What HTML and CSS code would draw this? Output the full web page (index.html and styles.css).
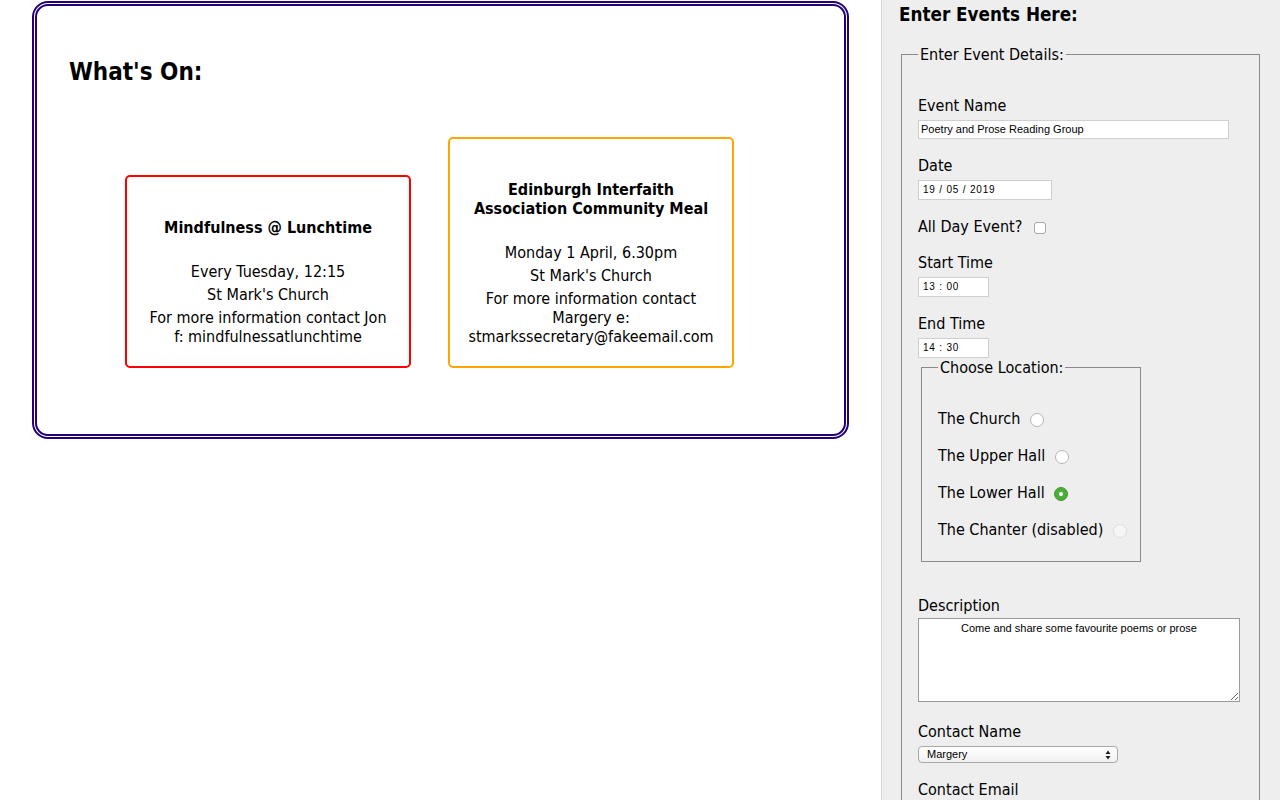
FILE: index.html
```html
<!DOCTYPE html>
<html lang="en">
<head>
<meta charset="utf-8">
<title>What's On</title>
<link rel="stylesheet" href="styles.css">
</head>
<body>
<div class="page">
  <main class="main">
    <section class="whats-on">
      <h2 class="title">What's On:</h2>
      <div class="cards">
        <article class="card card-red">
          <h4 class="card-title">Mindfulness @ Lunchtime</h4>
          <p>Every Tuesday, 12:15</p>
          <p>St Mark's Church</p>
          <p>For more information contact Jon f: mindfulnessatlunchtime</p>
        </article>
        <article class="card card-orange">
          <h4 class="card-title">Edinburgh Interfaith Association Community Meal</h4>
          <p>Monday 1 April, 6.30pm</p>
          <p>St Mark's Church</p>
          <p>For more information contact Margery e: stmarkssecretary@fakeemail.com</p>
        </article>
      </div>
    </section>
  </main>
  <aside class="sidebar">
    <h3 class="side-title">Enter Events Here:</h3>
    <form class="event-form">
      <fieldset class="details">
        <legend class="legend">Enter Event Details:</legend>
        <div class="field">
          <label class="lbl" for="ename">Event Name</label>
          <input class="inp inp-name" id="ename" type="text" value="Poetry and Prose Reading Group">
        </div>
        <div class="field">
          <label class="lbl" for="edate">Date</label>
          <input class="inp inp-date" id="edate" type="text" value="19 / 05 / 2019">
        </div>
        <div class="field">
          <label class="lbl-inline" for="allday">All Day Event? <input class="check" id="allday" type="checkbox"></label>
        </div>
        <div class="field">
          <label class="lbl" for="stime">Start Time</label>
          <input class="inp inp-time" id="stime" type="text" value="13 : 00">
        </div>
        <div class="field field-last">
          <label class="lbl" for="etime">End Time</label>
          <input class="inp inp-time" id="etime" type="text" value="14 : 30">
        </div>
        <fieldset class="location">
          <legend class="legend">Choose Location:</legend>
          <label class="radio-row">The Church <input class="radio" type="radio" name="loc"></label>
          <label class="radio-row">The Upper Hall <input class="radio" type="radio" name="loc"></label>
          <label class="radio-row">The Lower Hall <input class="radio" type="radio" name="loc" checked></label>
          <label class="radio-row">The Chanter (disabled) <input class="radio" type="radio" name="loc" disabled></label>
        </fieldset>
        <div class="field field-desc">
          <label class="lbl lbl-tight" for="desc">Description</label>
          <textarea class="ta" id="desc">Come and share some favourite poems or prose</textarea>
        </div>
        <div class="field">
          <label class="lbl" for="cname">Contact Name</label>
          <div class="select-wrap">
            <select class="sel" id="cname">
              <option>Margery</option>
              <option>Jon</option>
            </select>
            <svg class="sel-arrow" width="6" height="10" viewBox="0 0 6 10" aria-hidden="true">
              <path d="M0.5 4 L3 0.5 L5.5 4 Z" fill="#222"/>
              <path d="M0.5 6 L3 9.5 L5.5 6 Z" fill="#222"/>
            </svg>
          </div>
        </div>
        <div class="field">
          <label class="lbl" for="cemail">Contact Email</label>
          <input class="inp inp-email" id="cemail" type="email" value="">
        </div>
      </fieldset>
    </form>
  </aside>
</div>
</body>
</html>
```

FILE: styles.css
```css
html, body {
  margin: 0;
  padding: 0;
  background: #fff;
}

body {
  font-family: "DejaVu Sans Condensed", "DejaVu Sans", sans-serif;
  font-stretch: semi-condensed;
  font-size: 16px;
  color: #000;
}

.page {
  display: flex;
  align-items: stretch;
  min-height: 800px;
}

.main {
  width: 881px;
  flex: 0 0 881px;
}

.whats-on {
  margin: 1px 32px 0 32px;
  border: 5px double #230078;
  border-radius: 16px;
  padding: 32px;
}

.title {
  font-size: 24px;
  line-height: 29px;
  font-weight: bold;
  margin: 20px 0 50px;
}

.cards {
  display: flex;
  align-items: flex-end;
  gap: 37px;
  padding: 0 0 34px 56px;
}

.card {
  width: 286px;
  box-sizing: border-box;
  border: 2px solid #ff0000;
  border-radius: 5px;
  padding: 20px 16px 20px;
  text-align: center;
  line-height: 19px;
  font-size: 16px;
}

.card-orange {
  border-color: #ffa500;
}

.card-title {
  font-size: 16px;
  font-weight: bold;
  margin: 21px 0 25px;
}

.card p {
  margin: 0 0 4px;
}

.card p:last-child {
  margin-bottom: 0;
}

/* Sidebar */
.sidebar {
  flex: 1 1 auto;
  box-sizing: border-box;
  background: #eeeeee;
  border-left: 1px solid #d6d6d6;
  padding: 4px 18px 0 17px;
}

.side-title {
  font-size: 18.72px;
  line-height: 22px;
  font-weight: bold;
  margin: 0 0 18.5px;
}

.event-form {
  margin: 0;
}

.details {
  margin: 0 2px;
  border: 1px solid #8a8a8a;
  padding: 32px 16px 20px;
  min-width: 0;
}

.legend {
  padding: 0 2px;
  font-size: 16px;
  line-height: 19px;
}

.field {
  margin-bottom: 17px;
}

.field-last {
  margin-bottom: 0;
}

.lbl {
  display: block;
  line-height: 19px;
  margin-bottom: 5px;
}

.lbl-tight {
  margin-bottom: 3px;
}

.lbl-inline {
  display: block;
  line-height: 19px;
}

.inp {
  display: block;
  box-sizing: border-box;
  height: 20px;
  margin: 0;
  border: 1px solid #cfcfcf;
  background: #fff;
  padding: 0 2px;
  font-family: "Liberation Sans", Arial, sans-serif;
  font-size: 11px;
  color: #000;
  outline: none;
}

.inp-name {
  width: 311px;
  height: 19px;
}

.inp-date {
  width: 134px;
  padding-left: 4px;
  font-size: 10px;
  letter-spacing: 0.8px;
}

.inp-time {
  width: 71px;
  padding-left: 4px;
  font-size: 10px;
  letter-spacing: 0.8px;
}

.inp-email {
  width: 311px;
  background: #eef3ea;
}

.check {
  -webkit-appearance: none;
  appearance: none;
  width: 12px;
  height: 12px;
  margin: 0 0 0 7px;
  border: 1px solid #a8a8a8;
  border-radius: 3px;
  background: #fff;
  vertical-align: -2px;
}

.location {
  width: 220px;
  box-sizing: border-box;
  margin: 0 0 0 3px;
  border: 1px solid #8a8a8a;
  padding: 32px 16px 22px;
  min-width: 0;
}

.radio-row {
  display: block;
  line-height: 19px;
  margin-bottom: 18px;
  white-space: nowrap;
}

.radio-row:last-of-type {
  margin-bottom: 0;
}

.radio {
  -webkit-appearance: none;
  appearance: none;
  box-sizing: border-box;
  width: 14px;
  height: 14px;
  margin: 0 0 0 5px;
  border: 1px solid #b5b5b5;
  border-radius: 50%;
  background: #fff;
  vertical-align: -3px;
  position: relative;
}

.radio:checked {
  background: #4cae3a;
  border-color: #3f9a30;
}

.radio:checked::after {
  content: "";
  position: absolute;
  left: 4px;
  top: 4px;
  width: 4px;
  height: 4px;
  border-radius: 50%;
  background: #fff;
}

.radio:disabled {
  border-color: #dcdcdc;
  background: #f6f6f6;
}

.field-desc {
  margin-top: 34px;
  margin-bottom: 20px;
}

.ta {
  display: block;
  box-sizing: border-box;
  width: 322px;
  height: 84px;
  margin: 0;
  border: 1px solid #9a9a9a;
  background: #fff;
  padding: 3px 6px;
  font-family: "Liberation Sans", Arial, sans-serif;
  font-size: 11px;
  line-height: 13px;
  text-align: center;
  color: #000;
  resize: both;
  outline: none;
}

.select-wrap {
  position: relative;
  width: 200px;
}

.sel {
  -webkit-appearance: none;
  appearance: none;
  display: block;
  box-sizing: border-box;
  width: 200px;
  height: 17px;
  margin: 0;
  border: 1px solid #a9a9a9;
  border-radius: 4px;
  background: linear-gradient(#ffffff, #f1f1f1);
  padding: 0 0 0 8px;
  font-family: "Liberation Sans", Arial, sans-serif;
  font-size: 11px;
  line-height: 15px;
  color: #000;
  outline: none;
}

.sel-arrow {
  position: absolute;
  right: 7px;
  top: 4px;
  pointer-events: none;
}
```
